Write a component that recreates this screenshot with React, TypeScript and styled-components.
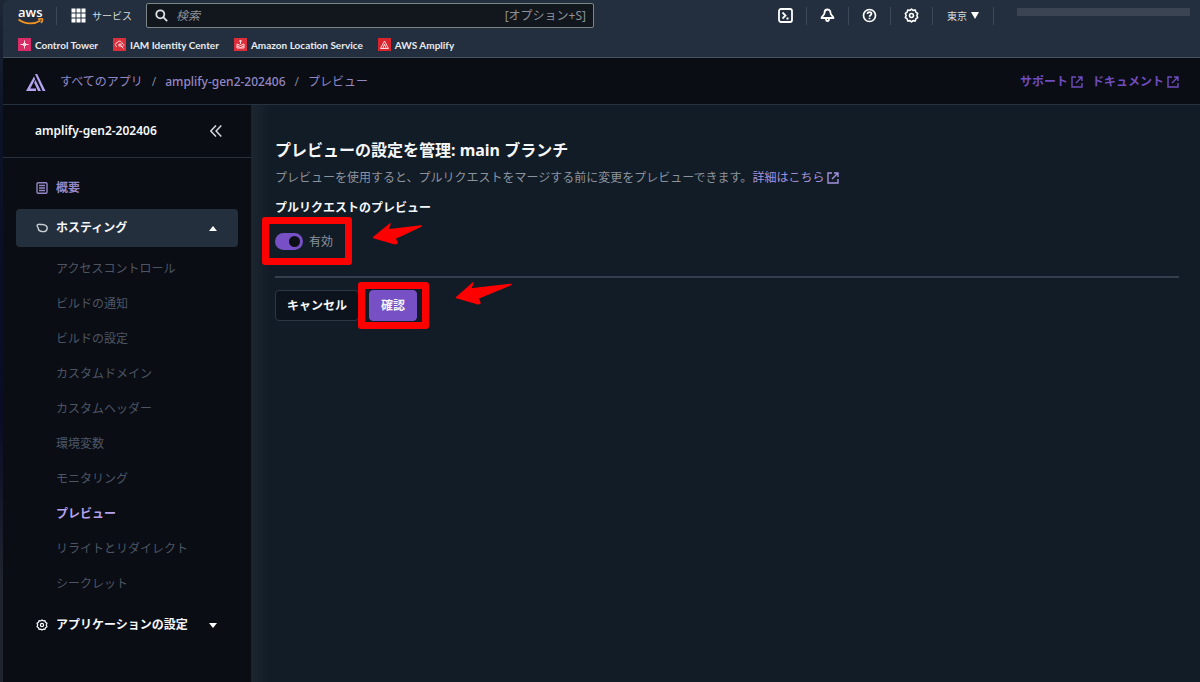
import React from 'react';
import styled, { createGlobalStyle, css } from 'styled-components';

const Global = createGlobalStyle`
  *, *::before, *::after { box-sizing: border-box; }
  html, body { margin: 0; }
  body {
    background: #0b1220;
    color: #f5f7fa;
    font-family: 'Noto Sans', 'Noto Sans CJK JP', sans-serif;
    font-size: 12px;
    line-height: 16px;
  }
  a { color: inherit; text-decoration: none; }
  button, input { font: inherit; color: inherit; }
  h1, h2, p, ul { margin: 0; padding: 0; font-size: inherit; }
  ul { list-style: none; }
  svg { display: block; flex: none; }
`;

const Page = styled.div`
  min-height: 100vh;
  display: flex;
  flex-direction: column;
  padding-left: 3px;
  background: linear-gradient(#1d2736 0, #0c1226 120px, #0a0c26 420px, #20242f 580px, #20242f 100%);
`;

const TopNav = styled.header`
  background: #232f3e;
  border-bottom: 1px solid #4a5361;
  height: 58px;
  border-top-left-radius: 6px;
`;

const NavRow = styled.div`
  display: flex;
  align-items: center;
  height: 31px;
  padding: 0 10px 0 15px;
`;

const Divider = styled.span`
  width: 1px;
  height: 18px;
  background: #3c4757;
`;

const Services = styled.button`
  display: flex;
  align-items: center;
  gap: 6px;
  margin: 0 14px;
  padding: 0;
  border: 0;
  background: none;
  color: #d5dbdb;
  font-size: 10px;
`;

const SearchBox = styled.label`
  display: flex;
  align-items: center;
  flex: 0 1 448px;
  min-width: 0;
  height: 25px;
  gap: 8px;
  padding: 0 7px 0 8px;
  border: 1px solid #7b8686;
  border-radius: 2px;
  background: #12171d;
  color: #8a9199;
`;

const SearchInput = styled.input`
  flex: 1;
  min-width: 0;
  padding: 0;
  border: 0;
  outline: 0;
  background: none;
  &::placeholder { color: #8a9199; font-style: italic; opacity: 1; }
`;

const Utilities = styled.div`
  display: flex;
  align-items: center;
  margin-left: auto;
`;

const IconButton = styled.button`
  display: flex;
  justify-content: center;
  width: 41px;
  padding: 0;
  border: 0;
  background: none;
  color: #fff;
`;

const Region = styled.button`
  display: flex;
  align-items: center;
  justify-content: center;
  gap: 4px;
  width: 60px;
  padding: 0;
  border: 0;
  background: none;
  color: #d5dbdb;
  font-size: 10px;
`;

const Account = styled.div`
  width: 173px;
  height: 8px;
  margin: 0 0 8px 23px;
  background: #3a4452;
`;

const Favorites = styled.nav`
  display: flex;
  align-items: center;
  gap: 15px;
  height: 26px;
  padding: 1px 0 0 15px;
`;

const Favorite = styled.a`
  display: flex;
  align-items: center;
  gap: 4px;
  font-family: Lato, 'Noto Sans', sans-serif;
  font-size: 10px;
  font-weight: 700;
  color: #e8ebee;
`;

const Tile = styled.span<{ $color: string }>`
  display: flex;
  width: 13px;
  height: 13px;
  background: ${p => p.$color};
`;

const CrumbBar = styled.div`
  display: flex;
  align-items: center;
  justify-content: space-between;
  height: 47px;
  padding: 1px 21px 0 23px;
  background: #0a0d14;
  border-bottom: 1px solid #26323f;
`;

const Crumbs = styled.nav`
  display: flex;
  align-items: center;
  gap: 9px;
  color: #9488c4;
`;

const AppMark = styled.svg`
  margin-right: 5px;
`;

const Slash = styled.span`
  color: #7d8591;
`;

const CrumbLink = styled.a<{ $strong?: boolean }>`
  font-weight: ${p => (p.$strong ? 500 : 400)};
`;

const HelpLinks = styled.nav`
  display: flex;
  gap: 9px;
  color: #6f4cbf;
  font-weight: 700;
`;

const ExtLink = styled.a`
  display: inline-flex;
  align-items: center;
  gap: 3px;
`;

const Body = styled.div`
  flex: 1;
  display: flex;
`;

const Sidebar = styled.aside`
  flex: 0 0 249px;
  background: #0a0d14;
  border-right: 1px solid #1b232e;
`;

const SideHeader = styled.div`
  display: flex;
  align-items: center;
  justify-content: space-between;
  height: 53px;
  padding: 0 29px 0 32px;
  border-bottom: 1px solid #26323f;
  font-weight: 600;
`;

const Collapse = styled.button`
  padding: 0;
  border: 0;
  background: none;
  color: #d5dbe0;
`;

const SideMenu = styled.nav`
  display: flex;
  flex-direction: column;
  padding: 11px 13px;
`;

const group = css`
  display: flex;
  align-items: center;
  gap: 8px;
  width: 100%;
  height: 38px;
  padding: 0 20px;
  border: 0;
  border-radius: 4px;
  font-weight: 700;
`;

const GroupLink = styled.a`
  ${group}
  color: #9488c4;
  margin-bottom: 2px;
`;

const GroupButton = styled.button<{ $open?: boolean }>`
  ${group}
  background: ${p => (p.$open ? '#232f3d' : 'none')};
`;

const Caret = styled.svg`
  margin-left: auto;
`;

const SubList = styled.ul`
  padding: 4px 0 5px;
`;

const SubLink = styled.a<{ $current?: boolean }>`
  display: flex;
  align-items: center;
  height: 35px;
  padding-left: 40px;
  color: ${p => (p.$current ? '#b5a2ee' : '#4d5564')};
  font-weight: ${p => (p.$current ? 700 : 400)};
`;

const Main = styled.main`
  flex: 1;
  min-width: 0;
  padding: 33px 21px 0 23px;
  background: linear-gradient(90deg, #1c2631 0, #121c26 18px);
`;

const Title = styled.h1`
  font-size: 16px;
  line-height: 24px;
  font-weight: 700;
`;

const Description = styled.p`
  display: flex;
  margin-top: 8px;
  color: #8b939e;
`;

const MoreLink = styled(ExtLink)`
  color: #a491dd;
`;

const FieldLabel = styled.h2`
  margin-top: 14px;
  font-weight: 700;
`;

const Marked = styled.div<{ $inset: string }>`
  position: relative;
  width: max-content;
  &::after {
    content: '';
    position: absolute;
    inset: ${p => p.$inset};
    border: 7px solid #f00;
    border-radius: 3px;
    pointer-events: none;
  }
`;

const Arrow = styled.svg<{ $left: number; $top: number }>`
  position: absolute;
  left: ${p => p.$left}px;
  top: ${p => p.$top}px;
`;

const ToggleLabel = styled.label`
  display: flex;
  align-items: center;
  gap: 6px;
  color: #8b939e;
`;

const Toggle = styled.input`
  appearance: none;
  display: flex;
  align-items: center;
  justify-content: flex-end;
  width: 28px;
  height: 17px;
  margin: 0;
  padding: 0 3px;
  border-radius: 9px;
  background: #7650c4;
  &::before {
    content: '';
    width: 11px;
    height: 11px;
    border-radius: 50%;
    background: #0c0f16;
  }
`;

const SwitchRow = styled.div`
  margin-top: 17px;
`;

const Rule = styled.hr`
  height: 2px;
  margin: 26px 0 12px;
  border: 0;
  background: #333f4e;
`;

const Actions = styled.div`
  display: flex;
  gap: 10px;
`;

const Button = styled.button<{ $primary?: boolean }>`
  height: 31px;
  padding: 0 11px;
  border: 1px solid ${p => (p.$primary ? '#7650c4' : '#2b3846')};
  border-radius: 4px;
  background: ${p => (p.$primary ? '#7650c4' : '#0c131c')};
  font-weight: 700;
`;

const External = () => (
  <svg width="12" height="12" viewBox="0 0 12 12" fill="none" stroke="currentColor" strokeWidth="1.4" aria-hidden>
    <path d="M5 1H1v10h10V7M7 1h4v4M11 1 5 7" />
  </svg>
);

const Gear = ({ size }: { size: number }) => (
  <svg width={size} height={size} viewBox="0 0 16 16" fill="none" stroke="currentColor" strokeWidth="1.7" strokeLinejoin="round" aria-hidden>
    <path d="M6.4 2.5 8 1.200l1.600 1.300 2.400-.3.600 2.200 2 1.400-.9 2.200.9 2.200-2 1.400-.6 2.200-2.400-.3L8 14.800l-1.600-1.300-2.400.3-.6-2.200-2-1.400.9-2.200-.9-2.200 2-1.400.6-2.200z" />
    <circle cx="8" cy="8" r="2.1" />
  </svg>
);

const ArrowShape = ({ left, top, path }: { left: number; top: number; path: string }) => (
  <Arrow $left={left} $top={top} width="60" height="28" viewBox="0 0 60 28" aria-hidden>
    <path d={path} fill="#f00" stroke="#f00" strokeWidth="1.5" strokeLinejoin="round" />
  </Arrow>
);

const favorites = [
  { name: 'Control Tower', color: '#d92b66', icon: 'M6.5 2.5v8M2.5 6.5h8M5 5l3 3M8 5 5 8' },
  { name: 'IAM Identity Center', color: '#dc2f3c', icon: 'M4 8.5C1.5 8 2 5 4 5c1-3 5-2 5 .5 2 0 2.5 2.5.5 3M6 6h2v2H6zM8 8l2.5 2.5' },
  { name: 'Amazon Location Service', color: '#dc2f3c', icon: 'M6.5 2v4M5 3h3M3 6l3.5 1.5L10 6M3 8l3.5 1.5L10 8M3 10h7M3 6v4M10 6v4' },
  { name: 'AWS Amplify', color: '#d8242c', icon: 'M2.5 10.5 6.5 3l4 7.5zM5 10l1.5-4L8 10' },
];

const pages = [
  'アクセスコントロール', 'ビルドの通知', 'ビルドの設定', 'カスタムドメイン', 'カスタムヘッダー',
  '環境変数', 'モニタリング', 'プレビュー', 'リライトとリダイレクト', 'シークレット',
];

const LogoLink = styled.a`
  display: flex;
  flex-direction: column;
  width: 26px;
  margin-right: 12px;
  font: 600 13px/11px 'Open Sans', sans-serif;
  color: #fff;
`;

export default function App() {
  return (
    <Page>
      <Global />
      <TopNav>
        <NavRow>
          <LogoLink href="#">
            aws
            <svg width="26" height="7" viewBox="0 0 26 7" fill="none" stroke="#f29423" strokeWidth="1.6" aria-hidden>
              <path d="M.5 1.500c7 5 16 5 22 1M20 1.200c2-.6 4-.6 4.500 0 .2 1-.5 2.800-1.500 3.800" />
            </svg>
          </LogoLink>
          <Divider />
          <Services>
            <svg width="15" height="15" viewBox="0 0 15 15" fill="#fff" aria-hidden>
              {[0, 5, 10].map(y => [0, 5, 10].map(x => <rect key={`${x}-${y}`} x={x + 0.5} y={y + 0.5} width="4" height="4" />))}
            </svg>
            サービス
          </Services>
          <SearchBox>
            <svg width="13" height="13" viewBox="0 0 13 13" fill="none" stroke="#dfe3e6" strokeWidth="1.8" aria-hidden>
              <circle cx="5.3" cy="5.3" r="4" /><path d="m8.200 8.200 4 4" />
            </svg>
            <SearchInput type="search" aria-label="検索" placeholder="検索" />
            <span>[オプション+S]</span>
          </SearchBox>
          <Utilities>
            <IconButton aria-label="CloudShell">
              <svg width="15" height="15" viewBox="0 0 15 15" fill="none" stroke="currentColor" strokeWidth="1.8" aria-hidden>
                <rect x="1" y="1" width="13" height="13" rx="2" /><path d="m4.500 4.500 3 3-3 3M8.500 10.500h2" />
              </svg>
            </IconButton>
            <Divider />
            <IconButton aria-label="通知">
              <svg width="15" height="15" viewBox="0 0 15 15" fill="none" stroke="currentColor" strokeWidth="1.8" strokeLinejoin="round" aria-hidden>
                <path d="M7.500 1.500C5 1.500 4.500 3.500 4.500 5c0 2-3 3.500-3 5h12c0-1.500-3-3-3-5 0-1.500-.5-3.500-3-3.500zM6 10.500c0 3.500 3 3.500 3 0" />
              </svg>
            </IconButton>
            <Divider />
            <IconButton aria-label="ヘルプ">
              <svg width="15" height="15" viewBox="0 0 15 15" fill="none" stroke="currentColor" strokeWidth="1.7" aria-hidden>
                <circle cx="7.5" cy="7.5" r="6" /><path d="M5.500 6c0-2.700 4-2.500 4-.2 0 1.500-2 1.400-2 3M7.500 9.800v1.500" />
              </svg>
            </IconButton>
            <Divider />
            <IconButton aria-label="設定"><Gear size={15} /></IconButton>
            <Divider />
            <Region>
              東京
              <svg width="8" height="7" viewBox="0 0 8 7" fill="#fff" aria-hidden><path d="M0 0h8L4 7z" /></svg>
            </Region>
            <Divider />
            <Account />
          </Utilities>
        </NavRow>
        <Favorites>
          {favorites.map(f => (
            <Favorite href="#" key={f.name}>
              <Tile $color={f.color}>
                <svg width="13" height="13" viewBox="0 0 13 13" fill="none" stroke="#ffd9de" strokeWidth="1" aria-hidden><path d={f.icon} /></svg>
              </Tile>
              {f.name}
            </Favorite>
          ))}
        </Favorites>
      </TopNav>

      <CrumbBar>
        <Crumbs>
          <AppMark width="20" height="18" viewBox="0 0 20 18" fill="#b3a2ee" aria-hidden>
            <path d="M8 3.500 9.200 6 4.300 15.500h5.700V18H0zM9 1h2.200L19.500 18h-2.800zM9.500 7l5.500 11h-3L8.200 9.800z" />
          </AppMark>
          <CrumbLink href="#">すべてのアプリ</CrumbLink>
          <Slash>/</Slash>
          <CrumbLink href="#" $strong>amplify-gen2-202406</CrumbLink>
          <Slash>/</Slash>
          <CrumbLink href="#">プレビュー</CrumbLink>
        </Crumbs>
        <HelpLinks>
          <ExtLink href="#">サポート<External /></ExtLink>
          <ExtLink href="#">ドキュメント<External /></ExtLink>
        </HelpLinks>
      </CrumbBar>

      <Body>
        <Sidebar>
          <SideHeader>
            amplify-gen2-202406
            <Collapse aria-label="折りたたむ">
              <svg width="12" height="12" viewBox="0 0 12 12" fill="none" stroke="currentColor" strokeWidth="1.5" aria-hidden>
                <path d="M6 .5.800 6 6 11.500M11.300.5 6.100 6l5.200 5.500" />
              </svg>
            </Collapse>
          </SideHeader>
          <SideMenu>
            <GroupLink href="#">
              <svg width="12" height="12" viewBox="0 0 12 12" fill="none" stroke="currentColor" strokeWidth="1.4" aria-hidden>
                <rect x="1" y=".7" width="10" height="10.6" rx="1" /><path d="M3 3.500h6M3 6h6M3 8.500h6" />
              </svg>
              概要
            </GroupLink>
            <GroupButton $open aria-expanded="true">
              <svg width="12" height="12" viewBox="0 0 12 12" fill="none" stroke="#c9ced4" strokeWidth="1.4" aria-hidden>
                <path d="M1.200 4.200C.8 2.700 2.300 2 3.800 2.400 5.300 2.800 7 2.200 8.500 2.800c2 .8 3 2.700 2.500 4.400-.6 2-3 2.600-5.200 2.300C3.500 9.200 2.200 8 2.300 6.200 2.200 5.400 1.400 5 1.200 4.200z" />
              </svg>
              ホスティング
              <Caret width="10" height="5" viewBox="0 0 10 5" fill="#fff" aria-hidden><path d="M1 5 5 0l4 5z" /></Caret>
            </GroupButton>
            <SubList>
              {pages.map(p => (
                <li key={p}><SubLink href="#" $current={p === 'プレビュー'}>{p}</SubLink></li>
              ))}
            </SubList>
            <GroupButton aria-expanded="false">
              <Gear size={12} />
              アプリケーションの設定
              <Caret width="10" height="5" viewBox="0 0 10 5" fill="#fff" aria-hidden><path d="M1 0h8L5 5z" /></Caret>
            </GroupButton>
          </SideMenu>
        </Sidebar>

        <Main>
          <Title>プレビューの設定を管理: main ブランチ</Title>
          <Description>
            プレビューを使用すると、プルリクエストをマージする前に変更をプレビューできます。
            <MoreLink href="#">詳細はこちら<External /></MoreLink>
          </Description>
          <FieldLabel>プルリクエストのプレビュー</FieldLabel>
          <SwitchRow>
            <Marked $inset="-16px -19px -15px -13px">
              <ToggleLabel><Toggle type="checkbox" role="switch" defaultChecked />有効</ToggleLabel>
              <ArrowShape left={97} top={-12} path="M1.500 16.500 18 3l-2.500 6L49 5 28 15l-5 2 2 5-2 .8z" />
            </Marked>
          </SwitchRow>
          <Rule />
          <Actions>
            <Button>キャンセル</Button>
            <Marked $inset="-8px -12px -8px -11px">
              <Button $primary>確認</Button>
              <ArrowShape left={86} top={-9} path="M1.500 16.500 18 2l-2.500 6L56 3.500 28 15l-5 2 2 5-2 .8z" />
            </Marked>
          </Actions>
        </Main>
      </Body>
    </Page>
  );
}
